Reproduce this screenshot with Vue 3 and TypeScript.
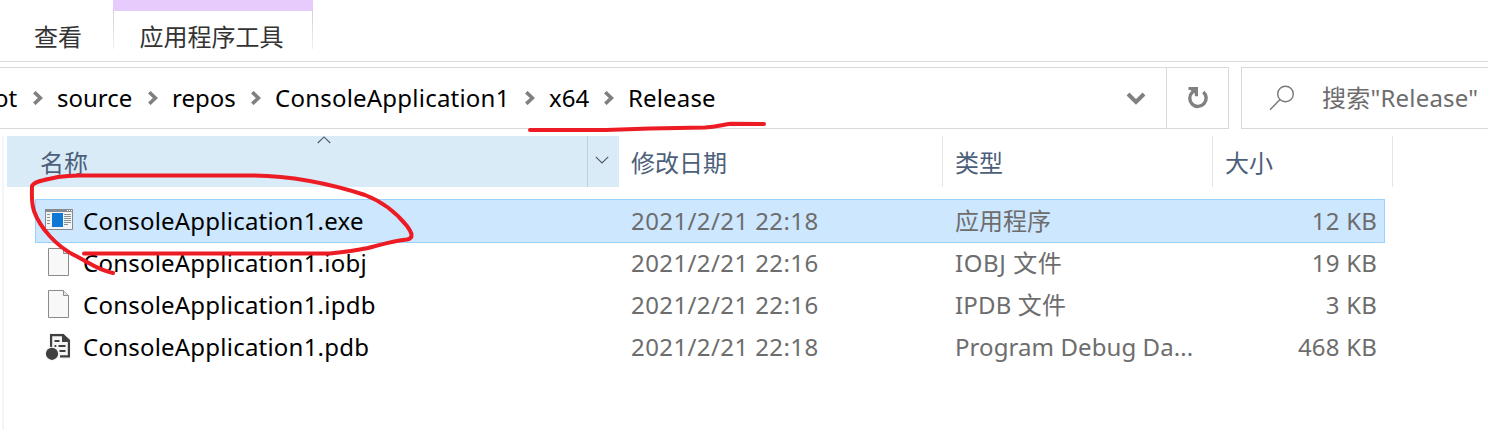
<script setup lang="ts">
interface Crumb { label: string; slot: string }
interface FileRow { name: string; date: string; type: string; size: string; icon: 'exe' | 'page' | 'pdb'; ext: string }

const crumbs: Crumb[] = [
  { label: 'source', slot: 'c-source' },
  { label: 'repos', slot: 'c-repos' },
  { label: 'ConsoleApplication1', slot: 'c-app' },
  { label: 'x64', slot: 'c-x64' },
]
const files: FileRow[] = [
  { name: 'ConsoleApplication1.exe', date: '2021/2/21 22:18', type: '应用程序', size: '12 KB', icon: 'exe', ext: 'exe' },
  { name: 'ConsoleApplication1.iobj', date: '2021/2/21 22:16', type: 'IOBJ 文件', size: '19 KB', icon: 'page', ext: 'iobj' },
  { name: 'ConsoleApplication1.ipdb', date: '2021/2/21 22:16', type: 'IPDB 文件', size: '3 KB', icon: 'page', ext: 'ipdb' },
  { name: 'ConsoleApplication1.pdb', date: '2021/2/21 22:18', type: 'Program Debug Da...', size: '468 KB', icon: 'pdb', ext: 'pdb' },
]
</script>

<template>
  <div class="window">
    <nav class="tabs">
      <span class="tab view">查看</span>
      <div class="tab tools"><i class="strip"></i><span>应用程序工具</span></div>
    </nav>

    <div class="bar">
      <div class="path">
        <div class="crumb c-root"><span>ot</span>
          <svg class="chev" width="10" height="14" viewBox="0 0 10 14"><path d="M1.3 1.2 7.4 7 1.3 12.8" /></svg>
        </div>
        <div v-for="c in crumbs" :key="c.label" class="crumb" :class="c.slot"><span>{{ c.label }}</span>
          <svg class="chev" width="10" height="14" viewBox="0 0 10 14"><path d="M1.3 1.2 7.4 7 1.3 12.8" /></svg>
        </div>
        <span class="c-last">Release</span>
        <svg class="drop" width="20" height="14" viewBox="0 0 20 14"><path d="M2 2 10 10 18 2" /></svg>
      </div>
      <div class="refresh">
        <svg width="22" height="24" viewBox="0 0 22 24">
          <path d="M5.2 6.4A8.2 8.2 0 1 0 16.3 6" fill="none" stroke="#808080" stroke-width="3.4" />
          <path d="M1.5 1H11V10.2H8L7.6 7 4.5 8 4 4H1.5Z" fill="#808080" />
        </svg>
      </div>
      <div class="search">
        <svg width="26" height="26" viewBox="0 0 26 26"><circle cx="16.5" cy="9" r="7.8" /><path d="M11 14.5 1 24.7" /></svg>
        <span>搜索"Release"</span>
      </div>
    </div>

    <div class="list">
      <div class="head">
        <div class="h name">名称
          <svg class="asc" width="14" height="8" viewBox="0 0 14 8"><path d="M.8 7 7 .9 13.2 7" /></svg>
        </div>
        <div class="filter"><svg width="14" height="8" viewBox="0 0 14 8"><path d="M.8 .8 7 7 13.2 .8" /></svg></div>
        <div class="h date">修改日期</div>
        <div class="h type">类型</div>
        <div class="h size">大小</div>
      </div>
      <div v-for="(f, i) in files" :key="f.name" class="row" :class="{ selected: i === 0 }">
        <div class="icon">
          <svg v-if="f.icon === 'exe'" class="exe-icon" width="28" height="21" viewBox="0 0 28 21">
            <path d="M.5 .5H27.5V20.5H.5Z" fill="#f4f4f4" stroke="#858b90" />
            <path d="M0 0H28V3H0Z" fill="#858b90" />
            <path d="M22 1h1v1h-1zM24 1h1v1h-1zM26 1h1v1h-1z" fill="#fff" />
            <path d="M7 4H18V18H7Z" fill="#0f78d4" />
            <path d="M2 5.5h3M2 8.5h3M2 11.5h3M2 14.5h3M19 5.5h7M19 7.5h7M19 9.5h7M19 11.5h7M19 13.5h7M19 15.5h4" stroke="#8b9095" />
          </svg>
          <svg v-else-if="f.icon === 'page'" class="page" width="21" height="28" viewBox="0 0 21 28">
            <path d="M.5 .5H15.5L20.5 5.5V27.5H.5Z" fill="#f8f8f8" stroke="#8a8a8a" />
            <path d="M15.5 .5V5.5H20.5" fill="#e5e5e5" stroke="#8a8a8a" />
          </svg>
          <svg v-else width="28" height="28" viewBox="0 0 28 28">
            <path d="M4 0H20L26 6V26H14L4 14Z" fill="#f5f5f5" />
            <path d="M6.1 14V2.1H17.5L23.9 8V23.4H15" fill="none" stroke="#404040" stroke-width="2.2" />
            <path d="M17 1H18.5L25 7V9H17Z" fill="#404040" />
            <path d="M9.5 8h5M13.5 13h7M9.5 13h1.8M14.5 18h6" stroke="#404040" stroke-width="2" />
            <circle cx="7" cy="20.8" r="7" fill="#f5f5f5" />
            <circle cx="7" cy="20.8" r="6.1" fill="#404040" />
          </svg>
        </div>
        <span class="fname">{{ f.name }}</span>
        <span class="fdate">{{ f.date }}</span>
        <span class="ftype" :class="f.ext">{{ f.type }}</span>
        <span class="fsize">{{ f.size }}</span>
      </div>
    </div>

    <svg class="ink" width="1488" height="430" viewBox="0 0 1488 430">
      <path d="M530 130H606L650 128.5 705 127.5C717 127 722 124.8 731 123.7L764 124" />
      <path d="M113 273C98 270 88 262 76 256C57 247 40 228 34 211C31 202 32 193 32 186C34 181 45 180 58 177Q70 175 84 175.5H246C291 175 334 185 365 195C386 203 399 216 407 226C412 233 414 238 407 239.5C392 241 384 244 368 248C353 251 344 252 330 253.5H84" />
    </svg>
  </div>
</template>

<style scoped>
.window { position: relative; width: 1488px; height: 430px; overflow: hidden; background: #fff; color: #000; font: 24px/36px "Noto Sans", "Noto Sans CJK SC", sans-serif; white-space: nowrap; }
.tabs { display: flex; height: 61px; border-bottom: 1px solid #dadada; color: #333; }
.view { width: 79px; padding: 19px 0 0 34px; }
.tools { width: 200px; height: 49px; display: flex; flex-direction: column; align-items: center; background: linear-gradient(#c8c8c8, #f0f0f0) left / 1px 100% no-repeat, linear-gradient(#c8c8c8, #f0f0f0) right / 1px 100% no-repeat; }
.strip { flex: none; width: 200px; height: 11px; margin-bottom: 8px; background: #e8cbfd; }
.tools span { margin-left: -3px; }
.bar { display: flex; height: 62px; margin-top: 5px; }
.path { display: flex; flex: none; align-items: center; box-sizing: border-box; width: 1166px; border: solid #d9d9d9; border-width: 1px 0; }
.crumb { display: flex; align-items: center; justify-content: space-between; flex: none; }
.chev { margin-right: 14px; fill: none; stroke: #808080; stroke-width: 3.6; }
.c-root { width: 57px; }
.c-root span { margin-left: -6px; }
.c-source { width: 115px; }
.c-repos { width: 103px; }
.c-app { width: 274px; letter-spacing: .22px; }
.c-x64 { width: 79px; }
.c-last { letter-spacing: .15px; }
.drop { margin: 2px 20px 0 auto; fill: none; stroke: #808080; stroke-width: 4; }
.refresh { display: flex; flex: none; align-items: center; justify-content: center; box-sizing: border-box; width: 63px; border: 1px solid #d9d9d9; }
.search { display: flex; flex: none; align-items: center; box-sizing: border-box; width: 247px; margin-left: 12px; padding-left: 27px; border: 1px solid #d9d9d9; border-right: 0; color: #6d6d6d; letter-spacing: .2px; }
.search svg { flex: none; margin-right: 27px; fill: none; stroke: #777; stroke-width: 1.4; }
.list { height: 294px; margin-top: 7px; margin-left: 2px; border-left: 2px solid #f5f5f5; }
.head { display: flex; height: 51px; margin-left: 3px; margin-bottom: 13px; color: #4c607a; }
.h { box-sizing: border-box; padding-top: 9px; }
.name { position: relative; width: 580px; padding-left: 33px; background: #d9ebf7; }
.asc { position: absolute; left: 310px; top: 0; }
.asc, .filter svg { fill: none; stroke: #4f565c; stroke-width: 1.1; }
.filter { display: flex; box-sizing: border-box; width: 32px; padding: 20px 0 0 7px; border-left: 1px solid #bed1dd; background: #d9ebf7; }
.date { width: 324px; padding-left: 12px; border-right: 1px solid #e5e5e5; }
.type { width: 270px; padding-left: 12px; border-right: 1px solid #e5e5e5; }
.size { width: 180px; padding-left: 12px; border-right: 1px solid #e5e5e5; }
.row { display: flex; align-items: center; width: 1348px; height: 42px; margin-left: 32px; color: #6d6d6d; }
.selected { background: #cde7ff; box-shadow: 0 0 0 1px #99d1ff; }
.icon { display: flex; align-items: center; width: 47px; padding-left: 9px; box-sizing: border-box; }
.exe-icon { margin-bottom: 3px; }
.page { margin-left: 3px; margin-bottom: 2px; }
.fname { width: 548px; color: #000; letter-spacing: .22px; }
.fdate { width: 324px; letter-spacing: .4px; }
.ftype { width: 258px; }
.ftype.iobj { letter-spacing: .6px; }
.ftype.ipdb { letter-spacing: .15px; }
.ftype.pdb { letter-spacing: .08px; }
.fsize { flex: 1; padding-right: 7px; text-align: right; letter-spacing: .2px; }
.ink { position: absolute; inset: 0; fill: none; stroke: #ed1c24; stroke-width: 4; stroke-linecap: round; stroke-linejoin: round; pointer-events: none; }
</style>

<style>
body { background: #fff; }
</style>
